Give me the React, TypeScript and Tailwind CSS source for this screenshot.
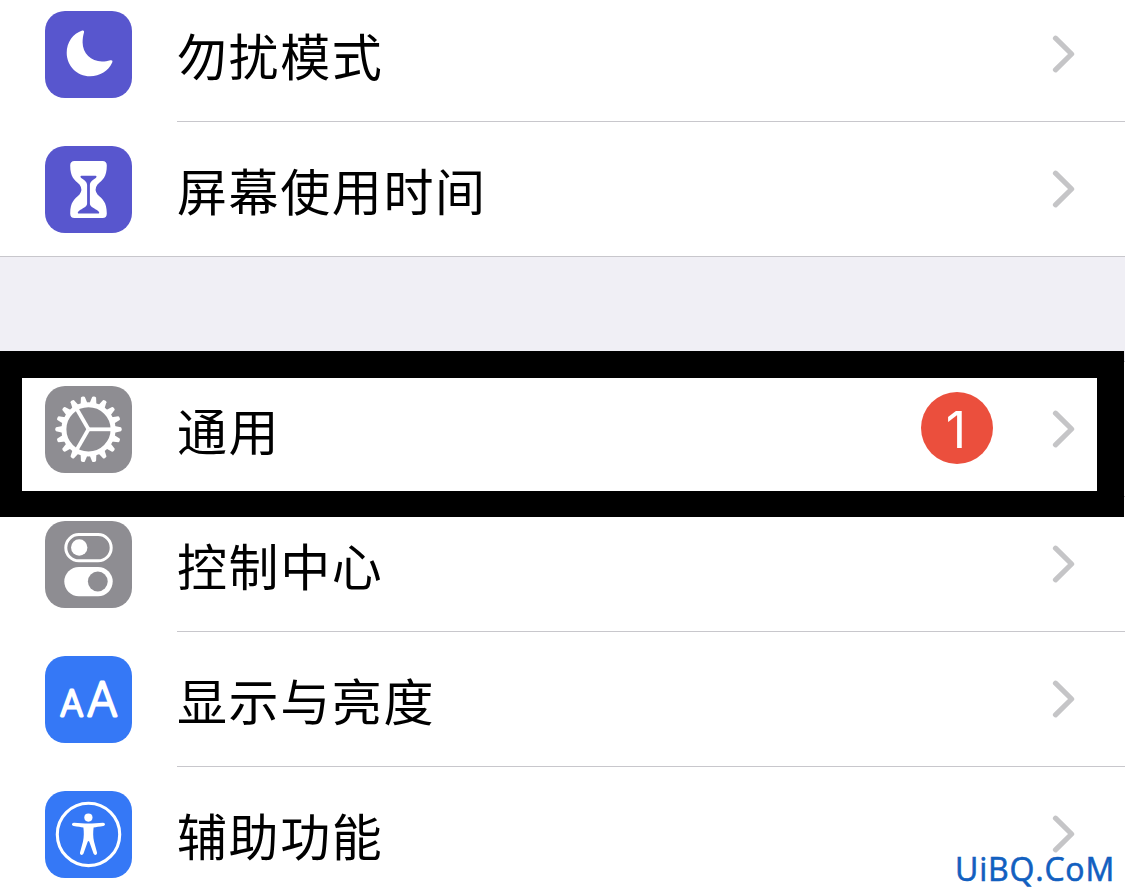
import type { ReactNode } from 'react';

type RowProps = {
  label: string;
  color: string;
  icon: ReactNode;
  badge?: number;
  divider?: 'inset' | 'full' | 'none';
};

export default function App() {
  return (
    <div className="relative w-[1125px] h-[894px] overflow-hidden bg-white text-black font-['Inter','Noto_Sans_CJK_SC',sans-serif]">
      <div className="-mt-[13px]">
        <Row label="勿扰模式" color="bg-[#5856ce]" icon={<MoonIcon />} />
        <Row label="屏幕使用时间" color="bg-[#5856ce]" icon={<HourglassIcon />} divider="full" />
        <div className="h-[105px] bg-[#f0eff5] border-b border-[#c8c7cc]" />
        <Row label="通用" color="bg-[#8e8d92]" icon={<GearIcon />} badge={1} />
        <Row label="控制中心" color="bg-[#8e8d92]" icon={<TogglesIcon />} />
        <Row label="显示与亮度" color="bg-[#3578f6]" icon={<TextSizeIcon />} />
        <Row label="辅助功能" color="bg-[#3578f6]" icon={<AccessibilityIcon />} divider="none" />
      </div>

      {/* highlight frame around the general row */}
      <div className="absolute left-0 top-[351px] w-[1124px] h-[166px] border-black border-t-[27px] border-b-[26px] border-l-[22px] border-r-[27px]" />

      <span className="absolute right-[10px] bottom-[3px] text-[32px] leading-[44px] tracking-[0.8px] whitespace-nowrap text-[#1260c0] [-webkit-text-stroke:0.6px_#1260c0] font-['Open_Sans',sans-serif]">
        UiBQ.CoM
      </span>
    </div>
  );
}

function Row({ label, color, icon, badge, divider = 'inset' }: RowProps) {
  return (
    <div className={`h-[135px] pl-[45px] flex ${divider === 'full' ? 'border-b border-[#c8c7cc]' : ''}`}>
      <div className={`mt-6 size-[87px] shrink-0 rounded-[20px] ${color}`}>{icon}</div>
      <div
        className={`ml-[45px] pr-[50px] flex-1 flex items-center ${divider === 'full' ? '' : 'border-b'} ${divider === 'inset' ? 'border-[#c8c7cc]' : 'border-transparent'}`}
      >
        <span className="flex-1 pb-px text-[50px] leading-[60px] tracking-[1.6px] font-['Noto_Sans_CJK_SC',sans-serif]">
          {label}
        </span>
        {badge !== undefined && (
          <span className="-mt-0.5 mr-[58px] pt-[3px] pr-[2px] size-[72px] rounded-full bg-[#eb4f3d] text-white text-[50px] leading-none flex items-center justify-center">
            {badge}
          </span>
        )}
        <svg width="24" height="40" viewBox="0 0 24 40" fill="none" className="shrink-0">
          <path d="M4.5 4.2 20.6 20 4.5 35.8" stroke="#c5c5c7" strokeWidth="5.2" strokeLinecap="round" strokeLinejoin="round" />
        </svg>
      </div>
    </div>
  );
}

function Glyph({ children }: { children: ReactNode }) {
  return (
    <svg width="87" height="87" viewBox="0 0 87 87" fill="none">
      {children}
    </svg>
  );
}

function MoonIcon() {
  return (
    <Glyph>
      <path
        fill="#fff"
        d="M37.2 19.6C28 22.6 21.7 31.4 21.7 41.8C21.7 54.8 32 65.3 45 65.3C55 65.3 63.5 59.8 67.2 51.5C68 49.6 67 48.8 65.3 49.3C62.5 50.1 60 50.5 57 50.5C46 50.5 37.6 42 37.6 31.5C37.6 28 38 24.6 39 21.4C39.4 20 38.6 19.1 37.2 19.6Z"
      />
    </Glyph>
  );
}

function HourglassIcon() {
  return (
    <Glyph>
      <path
        fill="#fff"
        d="M29.5 15H57.5Q61.8 15 61.8 19.5C61.8 31 57.5 34 52.5 38.5Q48.8 43.5 52.5 48.5C57.5 53 61.8 56 61.8 67.5Q61.8 72 57.5 72H29.5Q25.2 72 25.2 67.5C25.2 56 29.5 53 34.5 48.5Q38.2 43.5 34.5 38.5C29.5 34 25.2 31 25.2 19.5Q25.2 15 29.5 15Z"
      />
      <path
        fill="#5856ce"
        d="M36.4 29.8H50.6C51.8 29.8 51.8 31.2 50.8 31.9C47.8 34 44.9 35.6 44.9 39V57.5C44.9 61 49.5 62 53.4 65.2C54.8 66.4 54.4 67.6 52.8 67.6H34.2C32.6 67.6 32.2 66.4 33.6 65.2C37.5 62 42.1 61 42.1 57.5V39C42.1 35.6 39.2 34 36.2 31.9C35.2 31.2 35.2 29.8 36.4 29.8Z"
      />
    </Glyph>
  );
}

function GearIcon() {
  const teeth = Array.from({ length: 18 }, (_, i) => i * 20);
  return (
    <Glyph>
      <g transform="translate(43.5 43.3)">
        <circle r="24.6" stroke="#fff" strokeWidth="5" />
        {teeth.map((angle) => (
          <path key={angle} d="M26-3.4 32.4-2Q33.2-1.7 33.2 0Q33.2 1.7 32.4 2L26 3.4Z" fill="#fff" transform={`rotate(${angle})`} />
        ))}
        {[0, 120, 240].map((angle) => (
          <path key={angle} d="M0 0H24" stroke="#fff" strokeWidth="3.8" transform={`rotate(${angle})`} />
        ))}
      </g>
    </Glyph>
  );
}

function TogglesIcon() {
  return (
    <Glyph>
      <rect x="20.8" y="13.6" width="45.4" height="26.2" rx="13.1" stroke="#fff" strokeWidth="3" />
      <circle cx="34.2" cy="26.5" r="8.2" fill="#fff" />
      <rect x="19.3" y="46" width="48.4" height="29.2" rx="14.6" fill="#fff" />
      <circle cx="52.8" cy="60.5" r="9.9" fill="#8e8d92" />
    </Glyph>
  );
}

function TextSizeIcon() {
  return (
    <Glyph>
      <g
        fill="#fff"
        stroke="#fff"
        strokeWidth="2.8"
        strokeLinejoin="round"
        textAnchor="middle"
        className="font-['Inter',sans-serif] font-extralight"
      >
        <text x="26.7" y="60.3" fontSize="35">A</text>
        <text x="57.3" y="60.3" fontSize="46.5">A</text>
      </g>
    </Glyph>
  );
}

function AccessibilityIcon() {
  return (
    <Glyph>
      <circle cx="43.5" cy="43.4" r="31.2" stroke="#fff" strokeWidth="3.1" />
      <circle cx="43.4" cy="26.6" r="4.1" fill="#fff" />
      <path
        fill="#fff"
        d="M29 31.7C34 32.1 39 32.6 43.5 32.6S53 32.1 58 31.7C60.5 31.6 60.7 34.6 58.3 35C54.5 35.6 51 36 48.6 36.6C48 41 48 46 49 50.5L52 61.6C52.5 64.2 49.3 64.9 48.5 62.6L44.3 50.8Q43.5 49.2 42.7 50.8L38.5 62.6C37.7 64.9 34.5 64.2 35 61.6L38 50.5C39 46 39 41 38.4 36.6C36 36 32.5 35.6 28.7 35C26.3 34.6 26.5 31.6 29 31.7Z"
      />
    </Glyph>
  );
}
